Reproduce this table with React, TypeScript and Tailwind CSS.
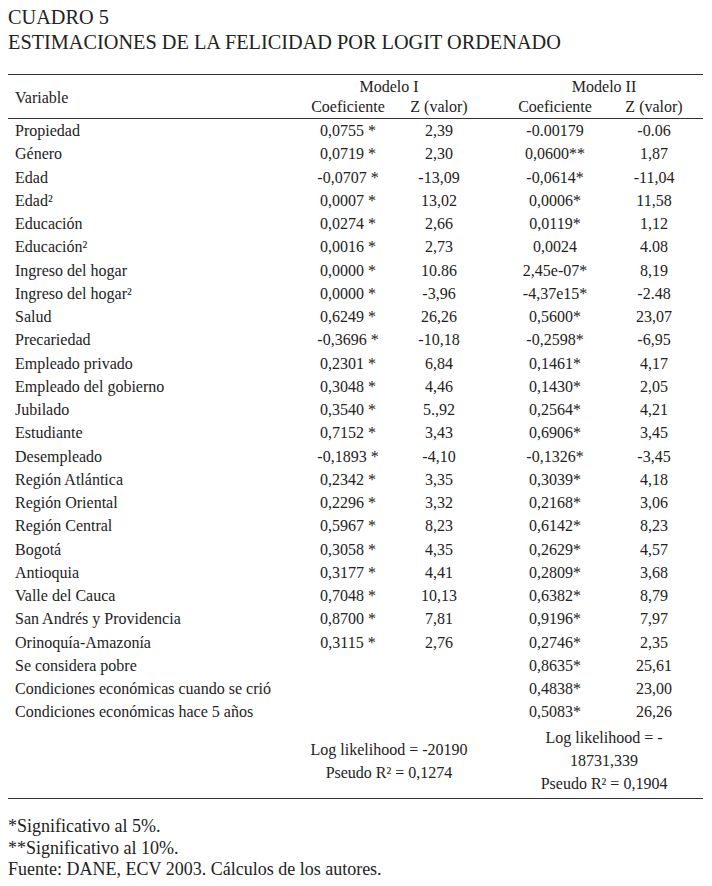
import React from "react";

type Row = [string, string, string, string, string];

const rows: Row[] = [
  ["Propiedad", "0,0755 *", "2,39", "-0.00179", "-0.06"],
  ["Género", "0,0719 *", "2,30", "0,0600**", "1,87"],
  ["Edad", "-0,0707 *", "-13,09", "-0,0614*", "-11,04"],
  ["Edad²", "0,0007 *", "13,02", "0,0006*", "11,58"],
  ["Educación", "0,0274 *", "2,66", "0,0119*", "1,12"],
  ["Educación²", "0,0016 *", "2,73", "0,0024", "4.08"],
  ["Ingreso del hogar", "0,0000 *", "10.86", "2,45e-07*", "8,19"],
  ["Ingreso del hogar²", "0,0000 *", "-3,96", "-4,37e15*", "-2.48"],
  ["Salud", "0,6249 *", "26,26", "0,5600*", "23,07"],
  ["Precariedad", "-0,3696 *", "-10,18", "-0,2598*", "-6,95"],
  ["Empleado privado", "0,2301 *", "6,84", "0,1461*", "4,17"],
  ["Empleado del gobierno", "0,3048 *", "4,46", "0,1430*", "2,05"],
  ["Jubilado", "0,3540 *", "5.,92", "0,2564*", "4,21"],
  ["Estudiante", "0,7152 *", "3,43", "0,6906*", "3,45"],
  ["Desempleado", "-0,1893 *", "-4,10", "-0,1326*", "-3,45"],
  ["Región Atlántica", "0,2342 *", "3,35", "0,3039*", "4,18"],
  ["Región Oriental", "0,2296 *", "3,32", "0,2168*", "3,06"],
  ["Región Central", "0,5967 *", "8,23", "0,6142*", "8,23"],
  ["Bogotá", "0,3058 *", "4,35", "0,2629*", "4,57"],
  ["Antioquia", "0,3177 *", "4,41", "0,2809*", "3,68"],
  ["Valle del Cauca", "0,7048 *", "10,13", "0,6382*", "8,79"],
  ["San Andrés y Providencia", "0,8700 *", "7,81", "0,9196*", "7,97"],
  ["Orinoquía-Amazonía", "0,3115 *", "2,76", "0,2746*", "2,35"],
  ["Se considera pobre", "", "", "0,8635*", "25,61"],
  ["Condiciones económicas cuando se crió", "", "", "0,4838*", "23,00"],
  ["Condiciones económicas hace 5 años", "", "", "0,5083*", "26,26"],
];

const App = () => {
  return (
    <div className="min-h-screen bg-white text-[#222] font-[family-name:'Liberation_Serif',serif]">
      <div className="pl-[8px] pt-[5px] text-[20.3px] leading-[25px]">
        <p>CUADRO 5</p>
        <p>ESTIMACIONES DE LA FELICIDAD POR LOGIT ORDENADO</p>
      </div>

      <table className="ml-[8px] mt-[19px] w-[695px] table-fixed border-collapse text-[16px]">
        <colgroup>
          <col className="w-[290px]" />
          <col className="w-[100px]" />
          <col className="w-[82px]" />
          <col className="w-[25px]" />
          <col className="w-[100px]" />
          <col className="w-[98px]" />
        </colgroup>
        <thead className="border-t-[1.5px] border-b-[1.5px] border-[#333] leading-[20px]">
          <tr>
            <th rowSpan={2} className="pl-[7px] pt-[2px] text-left align-middle font-normal">
              Variable
            </th>
            <th colSpan={2} className="pt-[2px] text-center font-normal">
              Modelo I
            </th>
            <th />
            <th colSpan={2} className="pt-[2px] text-center font-normal">
              Modelo II
            </th>
          </tr>
          <tr>
            <th className="pb-[1px] text-center font-normal">Coeficiente</th>
            <th className="pb-[1px] text-center font-normal">Z (valor)</th>
            <th />
            <th className="pb-[1px] text-center font-normal">Coeficiente</th>
            <th className="pb-[1px] text-center font-normal">Z (valor)</th>
          </tr>
        </thead>
        <tbody className="leading-[23.25px]">
          {rows.map(([name, c1, z1, c2, z2]) => (
            <tr key={name}>
              <td className="whitespace-nowrap pl-[7px]">{name}</td>
              <td className="text-center">{c1}</td>
              <td className="text-center">{z1}</td>
              <td />
              <td className="text-center">{c2}</td>
              <td className="text-center">{z2}</td>
            </tr>
          ))}
          <tr className="border-b-[1.5px] border-[#333]">
            <td className="h-[75px]" />
            <td colSpan={2} className="text-center align-middle">
              Log likelihood = -20190
              <br />
              Pseudo R² = 0,1274
            </td>
            <td />
            <td colSpan={2} className="text-center align-middle">
              Log likelihood = -
              <br />
              18731,339
              <br />
              Pseudo R² = 0,1904
            </td>
          </tr>
        </tbody>
      </table>

      <div className="pl-[8px] pt-[17px] text-[18px] leading-[21.5px]">
        <p>*Significativo al 5%.</p>
        <p>**Significativo al 10%.</p>
        <p>Fuente: DANE, ECV 2003. Cálculos de los autores.</p>
      </div>
    </div>
  );
};

export default App;
